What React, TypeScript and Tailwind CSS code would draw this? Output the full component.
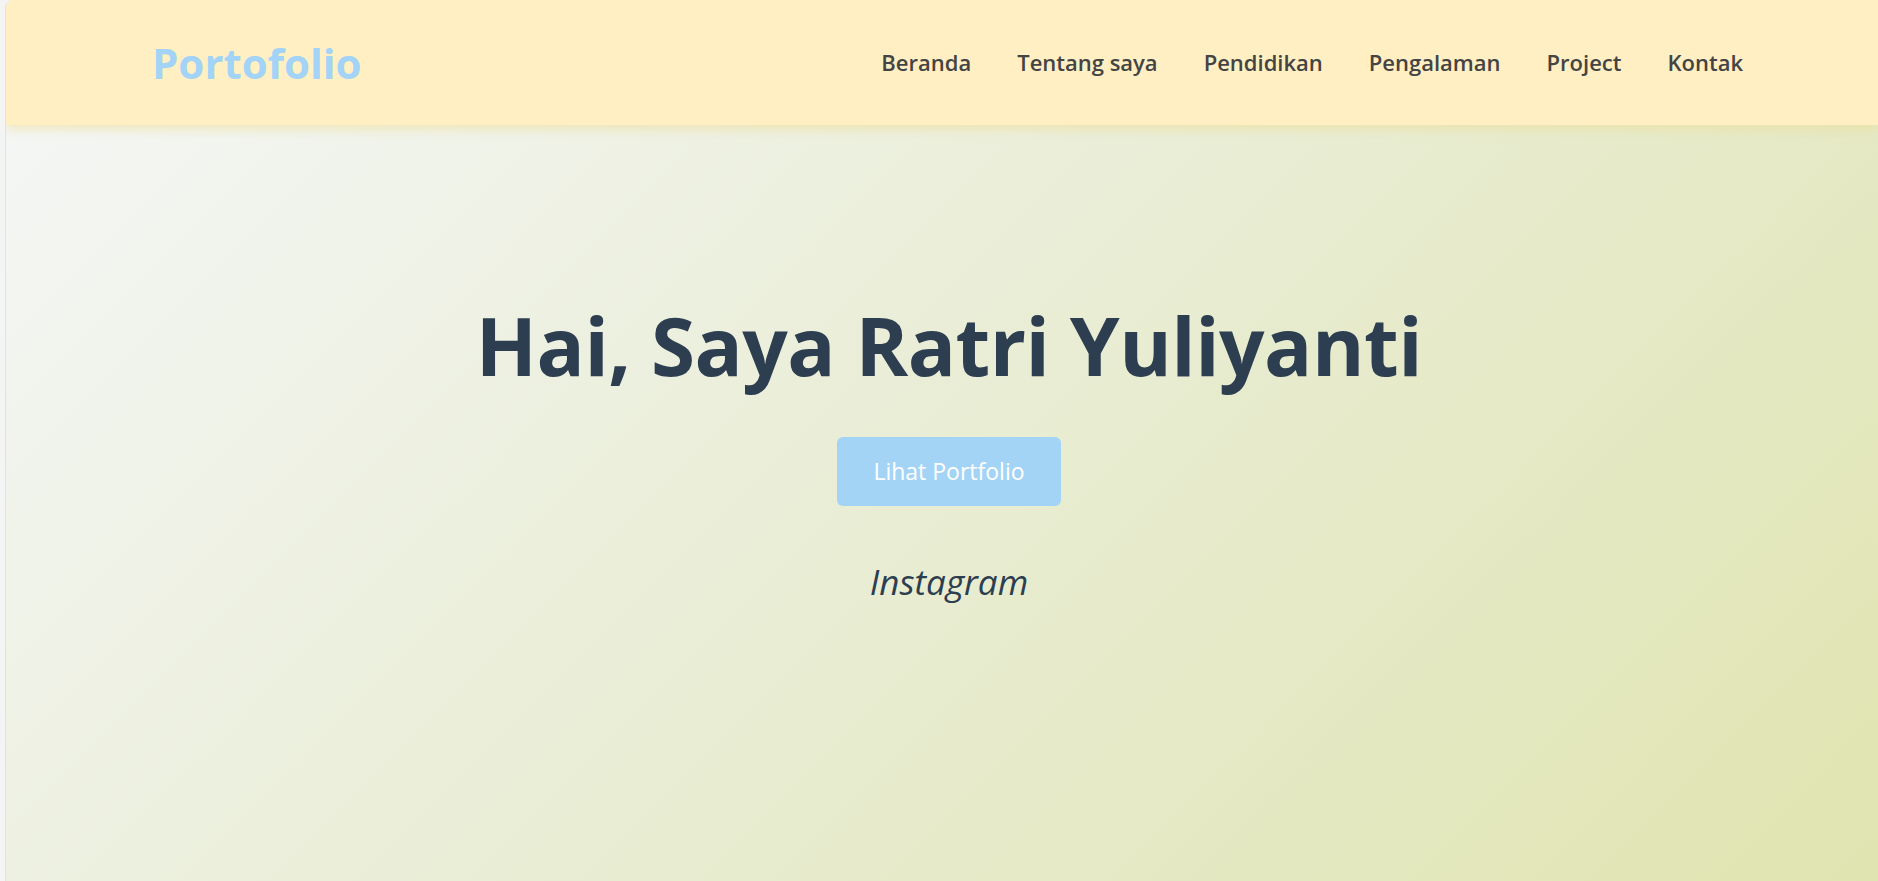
const navItems = ["Beranda", "Tentang saya", "Pendidikan", "Pengalaman", "Project", "Kontak"];

export default function App() {
  return (
    <div className="min-h-screen bg-[#f4f4f4] pl-[5px]" style={{ fontFamily: '"Open Sans", "Noto Sans", sans-serif' }}>
      <div className="min-h-screen flex flex-col border-l border-[#e2e2e2] rounded-tl-[8px] overflow-hidden bg-[linear-gradient(135deg,#f5f7f8_0%,#eaeed8_45%,#e0e4b0_100%)]">
        {/* Navbar */}
        <header className="relative z-10 h-[125px] shrink-0 flex items-center justify-between pl-[146px] pr-[135px] bg-[#ffefc2] shadow-[0_4px_10px_rgba(238,222,150,0.6)]">
          <h1 className="text-[42px] font-bold text-[#a3d3f6] leading-none">Portofolio</h1>
          <nav>
            <ul className="flex gap-[46px]">
              {navItems.map((item) => (
                <li key={item}>
                  <a href="#" className="text-[22px] font-semibold text-[#444444]">
                    {item}
                  </a>
                </li>
              ))}
            </ul>
          </nav>
        </header>

        {/* Hero */}
        <main className="flex-grow flex flex-col items-center pt-[172px] pl-[14px]">
          <h2 className="text-[80px] font-bold leading-[1.2] text-[#2c3e50] tracking-[-0.5px]">
            Hai, Saya Ratri Yuliyanti
          </h2>
          <a
            href="#"
            className="mt-[44px] h-[69px] px-[36px] flex items-center rounded-[6px] bg-[#a3d4f6] text-white text-[23px]"
          >
            Lihat Portfolio
          </a>
          <p className="mt-[55px] text-[35px] italic leading-[1.2] text-[#2c3e50]">Instagram</p>
        </main>
      </div>
    </div>
  );
}
